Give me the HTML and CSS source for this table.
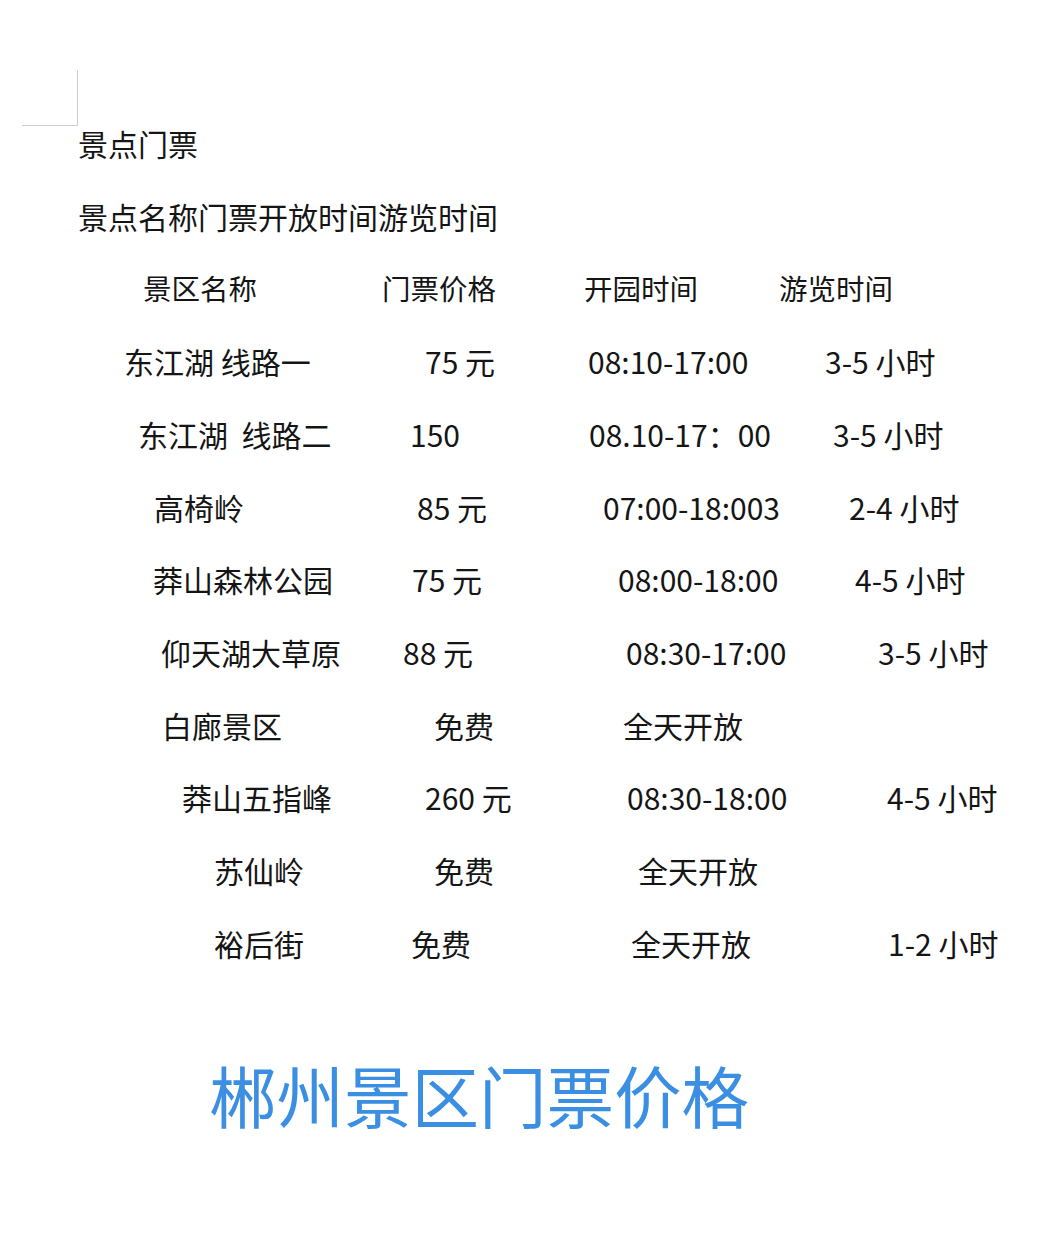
FILE: index.html
```html
<!DOCTYPE html>
<html lang="zh-CN">
<head>
<meta charset="utf-8">
<title>郴州景区门票价格</title>
<link rel="stylesheet" href="styles.css">
</head>
<body>
<div class="page">
  <div class="corner"></div>
  <p class="line">景点门票</p>
  <p class="line">景点名称门票开放时间游览时间</p>
  <div class="row hdr"><span>景区名称</span><span>门票价格</span><span>开园时间</span><span>游览时间</span></div>
  <div class="row r1"><span>东江湖 线路一</span><span>75 元</span><span>08:10-17:00</span><span>3-5 小时</span></div>
  <div class="row r2"><span>东江湖&nbsp; 线路二</span><span>150</span><span>08.10-17：00</span><span>3-5 小时</span></div>
  <div class="row r3"><span>高椅岭</span><span>85 元</span><span>07:00-18:003</span><span>2-4 小时</span></div>
  <div class="row r4"><span>莽山森林公园</span><span>75 元</span><span>08:00-18:00</span><span>4-5 小时</span></div>
  <div class="row r5"><span>仰天湖大草原</span><span>88 元</span><span>08:30-17:00</span><span>3-5 小时</span></div>
  <div class="row r6"><span>白廊景区</span><span>免费</span><span>全天开放</span><span></span></div>
  <div class="row r7"><span>莽山五指峰</span><span>260 元</span><span>08:30-18:00</span><span>4-5 小时</span></div>
  <div class="row r8"><span>苏仙岭</span><span>免费</span><span>全天开放</span><span></span></div>
  <div class="row r9"><span>裕后街</span><span>免费</span><span>全天开放</span><span>1-2 小时</span></div>
  <h1 class="title">郴州景区门票价格</h1>
</div>
</body>
</html>
```

FILE: styles.css
```css
html, body {
  margin: 0;
  padding: 0;
  background: #ffffff;
}

body {
  font-family: "Noto Sans CJK SC", "Noto Sans", sans-serif;
  color: #151515;
}

.page {
  position: relative;
  width: 1064px;
  height: 1260px;
  padding-top: 107px;
  box-sizing: border-box;
}

.corner {
  position: absolute;
  left: 22px;
  top: 70px;
  width: 55px;
  height: 55px;
  border-right: 1px solid #cfcfcf;
  border-bottom: 1px solid #cfcfcf;
}

.line {
  margin: 0;
  padding-left: 78px;
  font-size: 30px;
  line-height: 72.7px;
  white-space: nowrap;
}

.row {
  display: grid;
  font-size: 30px;
  line-height: 72.7px;
}

.row span {
  white-space: nowrap;
}

.hdr { font-size: 28.5px; padding-left: 143px; grid-template-columns: 239px 202px 195px auto; }
.r1  { padding-left: 124px; grid-template-columns: 301px 163px 237px auto; }
.r2  { padding-left: 138px; grid-template-columns: 272px 179px 244px auto; }
.r3  { padding-left: 154px; grid-template-columns: 263px 186px 246px auto; }
.r4  { padding-left: 153px; grid-template-columns: 259px 206px 237px auto; }
.r5  { padding-left: 161px; grid-template-columns: 242px 223px 252px auto; }
.r6  { padding-left: 162px; grid-template-columns: 272px 189px 200px auto; }
.r7  { padding-left: 182px; grid-template-columns: 243px 202px 260px auto; }
.r8  { padding-left: 214px; grid-template-columns: 220px 204px 200px auto; }
.r9  { padding-left: 214px; grid-template-columns: 197px 220px 257px auto; }

.title {
  margin: 75px 0 0 0;
  padding-left: 209px;
  font-size: 67.5px;
  font-weight: 400;
  line-height: 80px;
  color: #3b8fe2;
  white-space: nowrap;
}
```
